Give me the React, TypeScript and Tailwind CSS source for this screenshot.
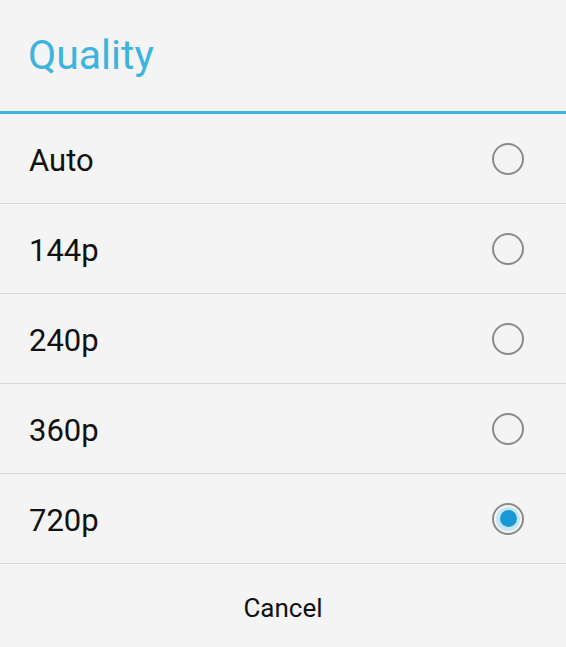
import React, { useState } from 'react';

const options = ['Auto', '144p', '240p', '360p', '720p'];

const Radio: React.FC<{ checked: boolean }> = ({ checked }) => (
  <div className="w-[32px] h-[32px] rounded-full border-2 border-[#8a8a8a] flex items-center justify-center">
    {checked && (
      <div className="w-[24px] h-[24px] rounded-full bg-[#c7e6f4] flex items-center justify-center">
        <div className="w-[17px] h-[17px] rounded-full bg-[#1a98d5]" />
      </div>
    )}
  </div>
);

export default function App() {
  const [selected, setSelected] = useState('720p');

  return (
    <div
      className="w-[566px] h-[647px] bg-[#f4f4f4] flex flex-col overflow-hidden"
      style={{ fontFamily: 'Roboto, "Noto Sans", sans-serif' }}
    >
      {/* Title */}
      <div className="h-[111px] flex items-center pl-[28px]">
        <h1 className="text-[41px] leading-none text-[#3db3de]">Quality</h1>
      </div>
      <div className="h-[3px] bg-[#3db3de]" />

      {/* Options */}
      <div className="flex flex-col">
        {options.map((opt) => (
          <button
            key={opt}
            onClick={() => setSelected(opt)}
            className="h-[90px] border-b border-[#d8d8d8] flex items-center justify-between pl-[29px] pr-[42px] text-left"
          >
            <span className="text-[31px] text-[#111] pt-[5px]">{opt}</span>
            <Radio checked={selected === opt} />
          </button>
        ))}
      </div>

      {/* Footer */}
      <div className="flex-1 flex items-center justify-center">
        <button className="text-[26px] text-[#111] pt-[6px]">Cancel</button>
      </div>
    </div>
  );
}
